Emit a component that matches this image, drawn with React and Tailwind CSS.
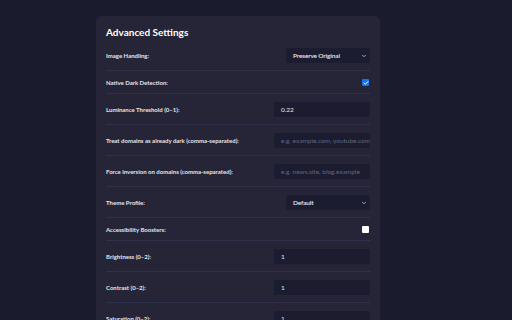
import { ChevronDown, Check } from "lucide-react";

function Row({ label, children, last }) {
  return (
    <div
      className={`flex items-center justify-between pt-2 pb-[7px] ${
        last ? "" : "border-b border-[#30304a]"
      }`}
    >
      <span className="text-[6px] font-bold leading-[7px] text-[#e4e4ee]">
        {label}
      </span>
      {children}
    </div>
  );
}

function Select({ value }) {
  return (
    <div className="flex h-[15px] w-[84px] items-center justify-between rounded-[2px] bg-[#1c1c30] pl-[7px] pr-[3px] text-[6.5px] font-semibold tracking-[-0.15px] text-[#e8e8f0]">
      <span>{value}</span>
      <ChevronDown size={6} strokeWidth={3} className="text-[#d0d0dc]" />
    </div>
  );
}

function Input({ value, placeholder }) {
  return (
    <div className="flex h-[15px] w-[96px] items-center overflow-hidden whitespace-nowrap rounded-[2px] bg-[#1c1c30] px-[7px] text-[6.5px]">
      {value ? (
        <span className="text-[#e8e8f0]">{value}</span>
      ) : (
        <span className="text-[#64647c]">{placeholder}</span>
      )}
    </div>
  );
}

function Checkbox({ checked }) {
  return checked ? (
    <div className="mr-[1px] flex h-[7px] w-[7px] items-center justify-center rounded-[1px] bg-[#1a73e8]">
      <Check size={6} strokeWidth={4} className="text-white" />
    </div>
  ) : (
    <div className="mr-[1px] h-[7px] w-[7px] rounded-[1px] bg-white" />
  );
}

export default function App() {
  return (
    <div
      className="h-[320px] w-[512px] overflow-hidden bg-[#1b1b2e] pt-4"
      style={{ fontFamily: 'Lato, "Noto Sans", sans-serif' }}
    >
      <div className="ml-[96px] w-[284px] rounded-[6px] bg-[#252537] px-[10px] pt-[10px]">
        <h2 className="mb-[2px] text-[10px] font-bold leading-[12px] text-white">
          Advanced Settings
        </h2>
        <Row label="Image Handling:">
          <Select value="Preserve Original" />
        </Row>
        <Row label="Native Dark Detection:">
          <Checkbox checked />
        </Row>
        <Row label="Luminance Threshold (0–1):">
          <Input value="0.22" />
        </Row>
        <Row label="Treat domains as already dark (comma-separated):">
          <Input placeholder="e.g. example.com, youtube.com" />
        </Row>
        <Row label="Force inversion on domains (comma-separated):">
          <Input placeholder="e.g. news.site, blog.example" />
        </Row>
        <Row label="Theme Profile:">
          <Select value="Default" />
        </Row>
        <Row label="Accessibility Boosters:">
          <Checkbox />
        </Row>
        <Row label="Brightness (0–2):">
          <Input value="1" />
        </Row>
        <Row label="Contrast (0–2):">
          <Input value="1" />
        </Row>
        <Row label="Saturation (0–2):" last>
          <Input value="1" />
        </Row>
      </div>
    </div>
  );
}
